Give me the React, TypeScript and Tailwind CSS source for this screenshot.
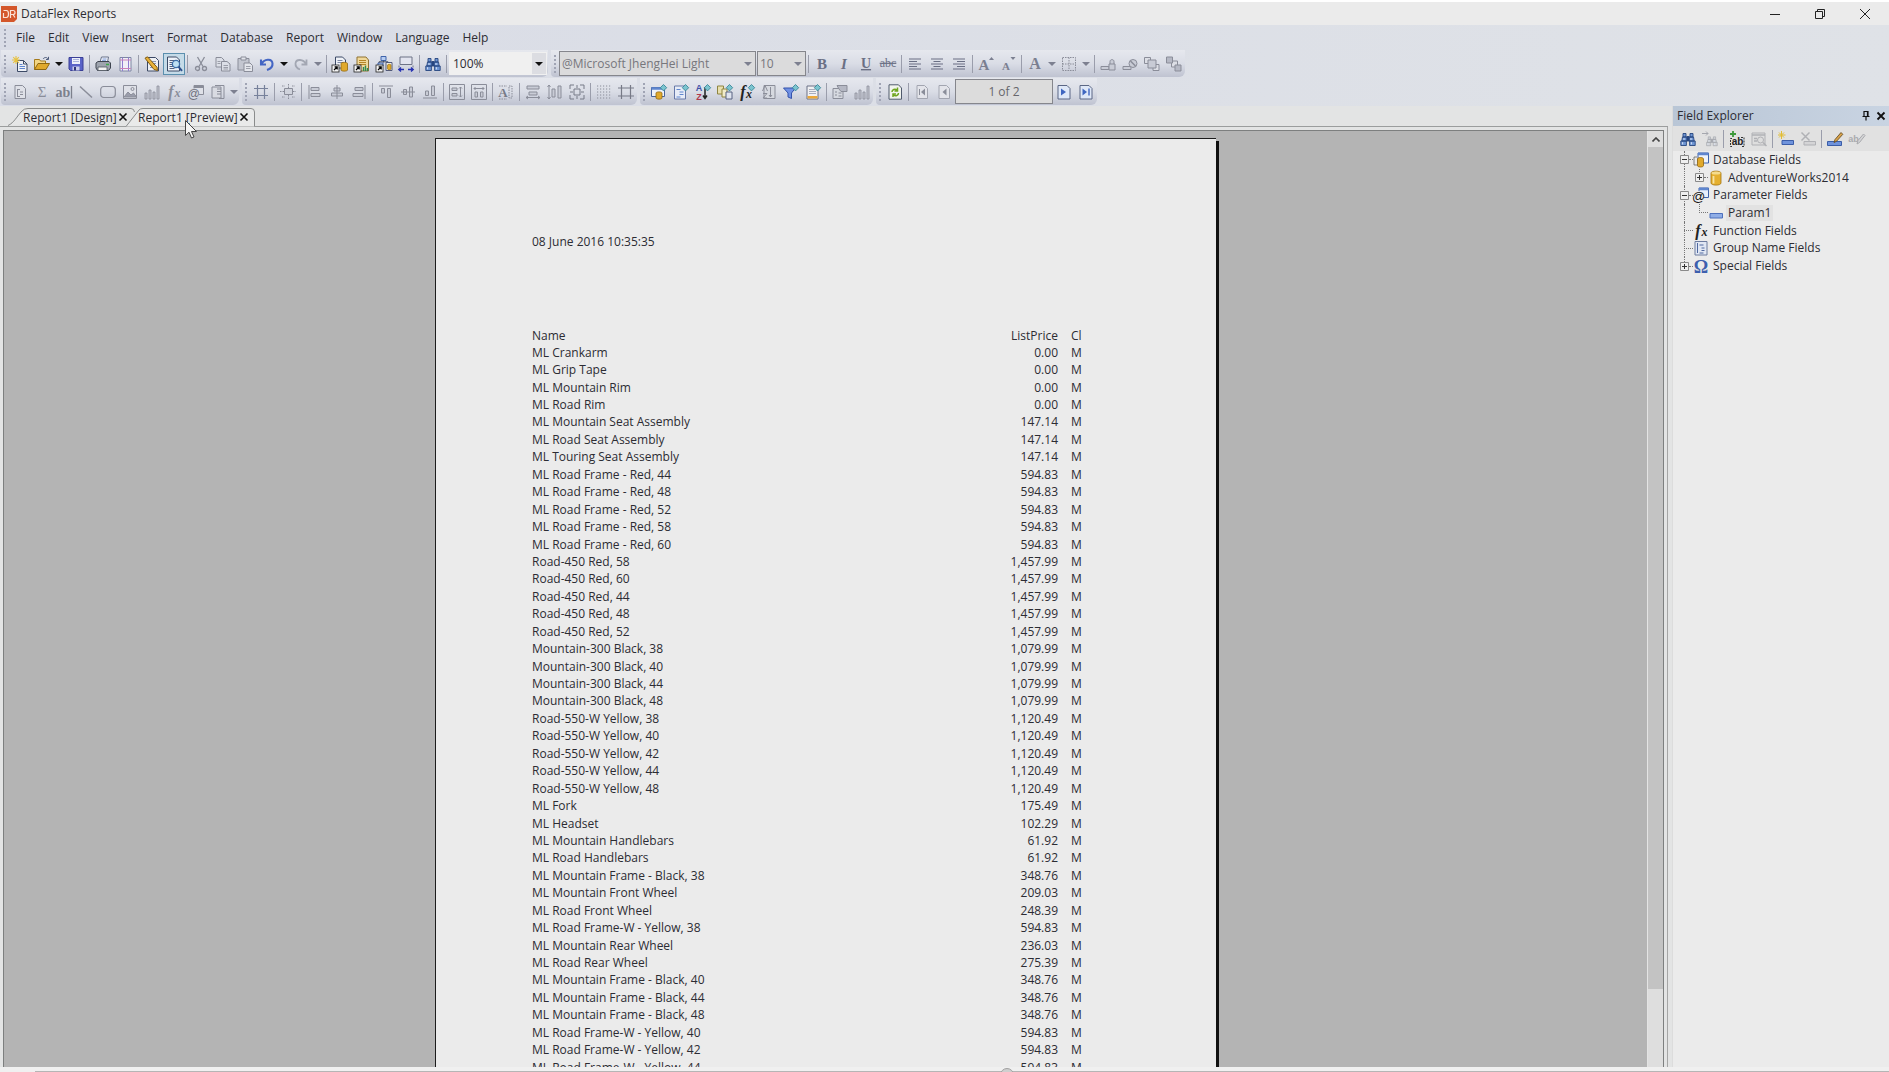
import type { ReactNode } from "react";

const G = "#8a8d99";
const GL = "#c9ccd6";
const N = "#3c4a66";
const B = "#5f86cf";
const Y = "#e0a92c";

const sheet = (stroke: string, fill: string) => (
  <path d="M3 1.5h7.5l3 3v10H3z" fill={fill} stroke={stroke} />
);
const diamond = <path d="M12.5 0.5l3.2 3.2-3.2 3.2-3.2-3.2z" fill="#7cc4cf" stroke="#2f7f92" strokeWidth=".8" />;
const shortcut = (
  <g>
    <rect x="0" y="9" width="7" height="7" fill="#f4f4f4" stroke="#222" strokeWidth=".8" />
    <path d="M2 14l3-3M2.6 10.8H5.2V13.4" stroke="#000" fill="none" strokeWidth="1.2" />
  </g>
);
const serif = (s: string, color: string, size = 13, extra: { italic?: boolean; underline?: boolean; strike?: boolean; y?: number; x?: number; bold?: boolean } = {}) => (
  <text
    x={extra.x ?? 8}
    y={extra.y ?? 13}
    textAnchor="middle"
    fontFamily="Liberation Serif, serif"
    fontWeight={extra.bold === false ? 400 : 700}
    fontSize={size}
    fontStyle={extra.italic ? "italic" : "normal"}
    textDecoration={extra.underline ? "underline" : extra.strike ? "line-through" : "none"}
    fill={color}
  >
    {s}
  </text>
);

const binoculars = (dark: string, mid: string) => (
  <g stroke={dark} fill={mid} strokeWidth=".9">
    <path d="M3 2.5h3V6H3zM10 2.5h3V6h-3zM2.5 6h4.5v4H1.8zM9 6h4.5l.7 4H9zM.8 10h5.6v4.5H.8zM9.6 10h5.6v4.5H9.6z" />
    <path d="M7 5.5h2V10H7z" fill={dark} />
    <path d="M2.6 11.2v2.2M11.4 11.2v2.2M4 7v2M11 7v2" stroke="#dfe8f8" />
  </g>
);

const icons: Record<string, ReactNode> = {
  new: (
    <g>
      <path d="M5.5 4.5h6l3.5 3.5v7.5H5.5z" fill="#eef1f6" stroke={N} />
      <path d="M11.5 4.5v3.5h3.5" fill="none" stroke={N} />
      <path d="M7.5 8.5h3M7.5 10.5h5.5M7.5 12.5h5.5" stroke={B} />
      <path d="M4 0v8M0 4h8M1.2 1.2l5.6 5.6M6.8 1.2L1.2 6.8" stroke="#e8c341" strokeWidth="1.1" />
    </g>
  ),
  open: (
    <g>
      <path d="M.5 13.5v-10h5l1 1.5h5v3" fill="#f3d685" stroke="#a57a1a" />
      <path d="M.5 13.5L4 7.5h11.5l-3.5 6z" fill={Y} stroke="#8d6612" />
      <path d="M9 3c1.5-2 4-2 5 0M14.5.8v2.7H12" fill="none" stroke="#4f5d7c" />
    </g>
  ),
  save: (
    <g>
      <path d="M1 1.5h14v13H2.5L1 13z" fill="#5a63c8" stroke="#3a3f96" />
      <path d="M4 2h8v6H4z" fill="#edf0fa" />
      <path d="M5 3.5h6M5 5.5h6" stroke="#a9b3dc" />
      <path d="M4.5 10.5h7v4h-7z" fill="#c9cee9" />
      <path d="M6 11h2v3.5H6z" fill="#2d3278" />
    </g>
  ),
  print: (
    <g>
      <path d="M5 6l1.5-5h7L12.5 6z" fill="#f5f6fa" stroke="#68738b" />
      <path d="M7.5 3h4M7 4.7h4" stroke={B} strokeWidth=".8" />
      <path d="M1 7l2-1.5h11L15.5 7v5l-2 2.5h-11L1 12z" fill="#9ea4ae" stroke="#3e444f" />
      <path d="M3 11h9v3.5H3z" fill="#f2f2f2" stroke="#4f5560" strokeWidth=".8" />
      <path d="M11 8.5h3" stroke="#3da84a" strokeWidth="1.5" />
    </g>
  ),
  margins: (
    <g>
      <path d="M3 1.5h11v13.5H3z" fill="#f0eff6" stroke="#7e86a3" />
      <path d="M5.5 1.5v13.5M11.5 1.5v13.5" stroke="#8d7bd0" />
      <path d="M3 4h11M3 12.5h11" stroke="#c882b8" />
    </g>
  ),
  edit: (
    <g>
      <path d="M3.5 1.5h8l3 3v10.5h-11z" fill="#eef0f4" stroke={N} />
      <path d="M6 5.5h6M6 7.5h6M6 9.5h6M6 11.5h6" stroke="#8d98b3" />
      <path d="M1 2.2L3.5.8l9.5 10.4.5 3.3-3.5-1z" fill="#e8b23a" stroke="#7f5a12" />
    </g>
  ),
  preview: (
    <g>
      <path d="M1.5 1h9l3 3v11h-12z" fill="#eef2f8" stroke={N} />
      <path d="M3.5 4.5h5M3.5 6.5h3.5M3.5 8.5h3M3.5 10.5h4M3.5 12.5h5" stroke="#55627f" />
      <circle cx="10" cy="8" r="3.6" fill="#bfe0f2" stroke="#3d6ea8" strokeWidth="1.3" />
      <path d="M12.6 10.8L16 14.8" stroke="#2d4f8c" strokeWidth="2" />
    </g>
  ),
  cut: (
    <g fill="none" stroke={G} strokeWidth="1.3">
      <path d="M4.5 1l5.5 9.5M11.5 1L6 10.5" />
      <circle cx="4.5" cy="12.5" r="2" />
      <circle cx="11.5" cy="12.5" r="2" />
    </g>
  ),
  copy: (
    <g stroke={G} fill="#dcdfe7">
      <path d="M1 1.5h5.5L9 4v7H1z" />
      <path d="M6.5 5.5H12l3 2.5v7H6.5z" />
      <path d="M8.5 9.5h4.5M8.5 11.5h4.5M8.5 13h4.5M2.5 5.5h3M2.5 7.5h3" strokeWidth=".8" />
    </g>
  ),
  paste: (
    <g stroke={G} fill="#c3c6d0">
      <path d="M1 2.5h11V14H1z" />
      <path d="M4 1h5v3H4z" fill="#e3e5eb" />
      <path d="M7 7h6l2.5 2.5v6H7z" fill="#e3e5eb" />
      <path d="M9 10.5h4.5M9 12.5h4.5" strokeWidth=".8" />
    </g>
  ),
  undo: <path d="M2 3.5v5h5M2.5 8C5 3 13 2 13.5 7.5c.3 3-2.5 5.5-5.5 6.5" fill="none" stroke="#4466c4" strokeWidth="2.1" />,
  redo: <path d="M13.5 3.5v5h-5M13 8C10.5 3 3 2.5 2.5 7.5 2.3 10.5 4.5 12.5 7 13.5" fill="none" stroke="#a3a7b3" strokeWidth="1.8" />,
  dbLink: (
    <g>
      <path d="M3.5 1h7l3 3v8h-10z" fill="#eef1f6" stroke={N} />
      <path d="M5.5 4.5h5M5.5 6.5h6" stroke="#7c88a5" />
      <path d="M9 7.5c0-1.5 6.5-1.5 6.5 0v6.5c0 1.5-6.5 1.5-6.5 0z" fill={Y} stroke="#92680f" strokeWidth=".8" />
      {shortcut}
    </g>
  ),
  groupLink: (
    <g>
      <path d="M3 1h9l2.5 3v11H3z" fill="#f0d89a" stroke="#8f7233" />
      <path d="M5 4.5h7M5 6.5h7M5 8.5h7" stroke="#b58628" />
      <path d="M9.5 15v-4M11.5 15V9.5M13.5 15v-3" stroke="#2e8b57" strokeWidth="1.4" />
      {shortcut}
    </g>
  ),
  tableLink: (
    <g>
      <path d="M5 .5h5v4H5z" fill="#b6cdf2" stroke="#3e63aa" />
      <path d="M2 7h5v3H2z" fill="#b6cdf2" stroke="#3e63aa" />
      <path d="M7.5 4.5v2M3 7V5.800h9V6" stroke="#444f68" fill="none" />
      <path d="M10 6.5h6v8h-6z" fill="#f3f1e5" stroke="#50597a" />
      <path d="M11.5 9c0-1 3.5-1 3.5 0v4c0 1-3.5 1-3.5 0z" fill={Y} stroke="#92680f" strokeWidth=".6" />
      {shortcut}
    </g>
  ),
  fitWidth: (
    <g>
      <path d="M2 1h12v7.5H2z" fill="#e2e4ef" stroke="#6d7386" />
      <path d="M1 9.5v2M15 9.5v2" stroke="#6d7386" />
      <path d="M1 13.5h5M3 11.5l-2.2 2L3 15.5M15 13.5h-5M13 11.5l2.2 2-2.2 2" stroke="#2530b0" strokeWidth="1.4" fill="none" />
    </g>
  ),
  find: binoculars("#27467f", "#6f96d4"),
  findGrey: (
    <g>
      <g transform="translate(4 4) scale(.74)">{binoculars("#a5a7ae", "#d0d2d6")}</g>
      <path d="M0 2.5h6M4 .5l2 2-2 2" stroke="#a5a7ae" fill="none" />
    </g>
  ),
  bold: serif("B", "#6a6f84", 15),
  italic: serif("I", "#6a6f84", 15, { italic: true }),
  underline: serif("U", "#6a6f84", 14, { underline: true, y: 12 }),
  strike: serif("abc", "#6a6f84", 12, { strike: true, y: 11, bold: false }),
  alignLeft: <path d="M2 3h12M2 5.5h8M2 8h12M2 10.5h8M2 13h12" stroke="#6a6f84" strokeWidth="1.2" />,
  alignCenter: <path d="M2 3h12M4.5 5.5h7M2 8h12M4.5 10.5h7M2 13h12" stroke="#6a6f84" strokeWidth="1.2" />,
  alignRight: <path d="M2 3h12M6 5.5h8M2 8h12M6 10.5h8M2 13h12" stroke="#6a6f84" strokeWidth="1.2" />,
  grow: (
    <g>
      {serif("A", "#7b7f90", 15, { x: 6, y: 14 })}
      <path d="M11 4l2.5-3L16 4z" fill="#7b7f90" />
    </g>
  ),
  shrink: (
    <g>
      {serif("A", "#7b7f90", 11, { x: 6, y: 14 })}
      <path d="M10.5 1h5L13 4z" fill="#7b7f90" />
    </g>
  ),
  color: serif("A", "#7b7f90", 16),
  borders: <path d="M1.5 1.5h13v13h-13zM8 1.5v13M1.5 8h13" fill="none" stroke={G} strokeDasharray="1.5 1" />,
  lock: (
    <g stroke={G} fill={GL}>
      <path d="M1 10.5h8v3H1z" />
      <path d="M9 8h6v6H9zM10 8V5.5c0-2.5 4-2.5 4 0V8" />
    </g>
  ),
  unlock: (
    <g stroke={G} fill={GL}>
      <path d="M1 10.5h8v3H1z" />
      <circle cx="11" cy="7.5" r="4" />
      <path d="M8.5 5l5 5" strokeWidth="1.5" />
    </g>
  ),
  front: (
    <g stroke={G} fill="#dcdee5">
      <path d="M9 8.5h6v6H9zM.5 1.5h6v6h-6z" />
      <path d="M4 4h8v8H4z" fill="#c8cbd5" />
    </g>
  ),
  back: (
    <g stroke={G} fill="#dcdee5">
      <path d="M5.5 5h6v6h-6z" />
      <path d="M.5 1h6v6h-6zM9 9h6v6H9z" fill="#b5b8c4" />
    </g>
  ),
  report: (
    <g>
      {sheet(G, "#dfe1e8")}
      <path d="M5 5.5h3M8 8h3M8 10.5h3M5 12.5h3M5.5 6v6" stroke={G} fill="none" />
    </g>
  ),
  sum: serif("Σ", G, 15, { bold: false }),
  label: (
    <g>
      <text x="7" y="12.5" textAnchor="middle" fontFamily="Liberation Serif, serif" fontSize="14" fontWeight="700" fill="#7d808c">ab</text>
      <path d="M15.5 2v12.5" stroke="#7d808c" strokeWidth="1.3" />
    </g>
  ),
  line: <path d="M2 2.5l12 11" stroke={G} strokeWidth="1.5" />,
  box: <rect x=".7" y="2.5" width="14.6" height="11" rx="3" fill="none" stroke={G} strokeWidth="1.2" />,
  image: (
    <g stroke={G} fill="#dfe1e8">
      <path d="M1.5 1.5h13v13h-13z" />
      <path d="M2 13l4-5 3 3 2.5-2 3 4z" fill="#9a9dab" />
      <circle cx="10.5" cy="5" r="1.5" />
    </g>
  ),
  bars: (
    <g fill="#c3c6d0" stroke={G} strokeWidth=".8">
      <path d="M1 9h2v6H1zM5 6h2v9H5zM9 8h2v7H9zM13 2h2v13h-2z" />
    </g>
  ),
  fx: (
    <g>
      {serif("f", G, 16, { italic: true, x: 5 })}
      {serif("x", G, 12, { italic: true, x: 11.5 })}
    </g>
  ),
  param: (
    <g>
      <path d="M6 1.5h9.5v9H6z" fill="#dfe1e8" stroke={G} />
      <path d="M6 3h9.5" stroke={G} strokeWidth="2" />
      <circle cx="5.8" cy="9.5" r="5.3" fill="#d6d9e2" />
      <text x="5.8" y="13.5" textAnchor="middle" fontFamily="Liberation Sans, sans-serif" fontSize="12" fill="#6f727e">@</text>
    </g>
  ),
  subreport: (
    <g stroke={G} fill="#d9dbe2">
      <path d="M2 3h9v11H2z" />
      <path d="M5 1.5h9v13H9M7 5h4M7 7.5h4M7 10h4" fill="none" />
    </g>
  ),
  grid1: <path d="M4.5 1v14M11.5 1v14M1 4.5h14M1 11.5h14" stroke="#77819b" strokeWidth="1.2" />,
  grid2: (
    <g stroke={G} fill="#d0d3dc">
      <path d="M4.5 4.5h8v6h-8z" />
      <path d="M8.5 0v4M8.5 11v4M0 7.5h4M13 7.5h3M2 2h3M12 2h3M2 13h3M12 13h3" strokeDasharray="1.5 1" />
    </g>
  ),
  aL: <path d="M2 1v14M4 3.5h8v3H4zM4 9.5h9v3H4z" stroke={G} fill={GL} />,
  aC: <path d="M8 1v14M2.5 9h11v3h-11zM5 4h6v3H5z" stroke={G} fill={GL} />,
  aR: <path d="M14 1v14M4 3.5h8v3H4zM2 9.5h10v3H2z" stroke={G} fill={GL} />,
  aT: <path d="M1 2h14M3.5 4.5h3V9h-3zM9.5 4.5h3v9h-3z" stroke={G} fill={GL} />,
  aM: <path d="M1 8h14M3.5 5.5h3v5h-3zM9.5 3h3v10h-3z" stroke={G} fill={GL} />,
  aB: <path d="M1 14h14M3.5 7h3v4.5h-3zM9.5 2h3v9.5h-3z" stroke={G} fill={GL} />,
  sH: (
    <g stroke={G} fill={GL}>
      <path d="M.5 .5h15v15H.5z" fill="none" />
      <path d="M3 4h5v2.500H3zM3 9.5h5V12H3z" />
      <path d="M11.5 3v10M10 4.5l1.5-1.5L13 4.5M10 11.5l1.5 1.5 1.5-1.5" fill="none" />
    </g>
  ),
  sW: (
    <g stroke={G} fill={GL}>
      <path d="M.5 .5h15v15H.5z" fill="none" />
      <path d="M4 8h2.5v5H4zM9.5 8H12v5H9.5z" />
      <path d="M3 4.5h10M4.5 3L3 4.5 4.5 6M11.5 3L13 4.5 11.5 6" fill="none" />
    </g>
  ),
  sA: (
    <g>
      {serif("A", "#777a87", 13, { x: 5, y: 13 })}
      <path d="M1 2h8M1 15h8M11 2h3v12h-3z" stroke={G} fill="none" strokeDasharray="1.5 1" />
    </g>
  ),
  eW: (
    <g stroke={G} fill={GL}>
      <path d="M2 2h12v3H2zM4 8h8v3H4z" />
      <path d="M1 13.5h14M3 12l-2 1.5L3 15M13 12l2 1.5-2 1.5" fill="none" />
    </g>
  ),
  eH: (
    <g stroke={G} fill={GL}>
      <path d="M5 5h3v8H5zM11 2h3v12h-3z" />
      <path d="M2 1v14M.5 3L2 1l1.5 2M.5 13L2 15l1.5-2" fill="none" />
    </g>
  ),
  eB: (
    <g stroke="#777a87" fill="none">
      <path d="M1 5V1h4M11 1h4v4M15 11v4h-4M5 15H1v-4" />
      <path d="M5 5h6v6H5zM8 1v3M8 12v3M1 8h3M12 8h3" />
    </g>
  ),
  dots: <path d="M1 2h14M1 5h14M1 8h14M1 11h14M1 14h14" stroke={G} strokeWidth="1.2" strokeDasharray="1.2 1.8" />,
  frame: <path d="M3.5 1v14M12.5 1v14M0 4h16M0 12h16" stroke="#777a87" strokeWidth="1.2" />,
  dbField: (
    <g>
      <path d="M.5 3.5h13v9H.5z" fill="#eff3fa" stroke="#46639d" />
      <path d="M.5 4.5h13" stroke={B} strokeWidth="2.5" />
      <path d="M5 9c0-1.5 6-1.5 6 0v5c0 1.5-6 1.5-6 0z" fill={Y} stroke="#92680f" strokeWidth=".8" />
      {diamond}
    </g>
  ),
  reportD: (
    <g>
      <path d="M1.5 2h10l1 1v12h-11z" fill="#e7ecf7" stroke="#6678a8" />
      <path d="M3.5 5.5h4M6.5 8h4M6.5 10.5h4M3.5 13h4" stroke={B} />
      {diamond}
    </g>
  ),
  sort: (
    <g>
      <text x="4" y="7" textAnchor="middle" fontFamily="Liberation Sans, sans-serif" fontSize="9" fontWeight="700" fill="#3c50a8">A</text>
      <text x="4" y="15.5" textAnchor="middle" fontFamily="Liberation Sans, sans-serif" fontSize="9" fontWeight="700" fill="#b0394c">Z</text>
      <path d="M10 3v11M8 11.5l2 3 2-3" stroke="#222" strokeWidth="1.5" fill="none" />
      {diamond}
    </g>
  ),
  group: (
    <g>
      <path d="M.5 2h6v8h-6z" fill="#e8dfae" stroke="#8e8440" />
      <path d="M5 5h5v8H5z" fill="#f2ecca" stroke="#8e8440" />
      <path d="M9 8h6v7H9z" fill="#dfe4ef" stroke="#596381" />
      {diamond}
    </g>
  ),
  fxD: (
    <g>
      {serif("f", "#222", 16, { italic: true, x: 4 })}
      {serif("x", "#222", 12, { italic: true, x: 10, y: 14 })}
      {diamond}
    </g>
  ),
  sortGrey: (
    <g>
      <path d="M3 1.5h11v13H3z" fill="#d6d9e0" stroke={G} />
      <path d="M1.5 7L4 1.5 6.5 7M2 9.5h4l-4 4.5h4M9.5 3v10M8 11l1.5 2 1.5-2" stroke={G} fill="none" />
    </g>
  ),
  filter: (
    <g>
      <path d="M.5 4h12L8.5 9v5.500L5 13V9z" fill="#6f90e4" stroke="#3553ab" />
      {diamond}
    </g>
  ),
  section: (
    <g>
      <path d="M2 2h11v13H2z" fill="#f1f1f3" stroke="#6a7186" />
      <path d="M2.5 12h10v2.5h-10z" fill="#eba83a" />
      <path d="M4 5.5h6M4 7.5h7M4 9.5h7" stroke="#a7adbd" />
      {diamond}
    </g>
  ),
  props: (
    <g stroke={G} fill="#d6d9e0">
      <path d="M1 4.5h10v10H1z" />
      <path d="M5 1.5h10v6H9L7 5z" fill="#b5b8c4" />
      <path d="M3 8h2M3 11h2M6.5 9h3M6.5 12h3" />
    </g>
  ),
  refresh: (
    <g>
      <path d="M2 .8h9.5L14.5 4v11.2H2z" fill="#f1f4ee" stroke="#505a6d" />
      <path d="M5 8c0-2.5 3-3.5 5-2M10.5 3.5V7H7.5M11.5 9c0 2.5-3 3.5-5 2M6 13V10h3" fill="none" stroke="#6fa51f" strokeWidth="1.5" />
    </g>
  ),
  first: (
    <g>
      {sheet("#a2a5b0", "#e3e4ea")}
      <path d="M5.5 5v6" stroke={G} />
      <path d="M11 4.5v7L7 8z" fill={G} />
    </g>
  ),
  prev: (
    <g>
      {sheet("#a2a5b0", "#e3e4ea")}
      <path d="M10.5 4.5v7L6.5 8z" fill={G} />
    </g>
  ),
  next: (
    <g>
      <path d="M2 1.5h9l3 3v10.5H2z" fill="#dfe8f8" stroke="#5b6785" />
      <path d="M5 4.500v7L10 8z" fill="#3f66c0" />
    </g>
  ),
  last: (
    <g>
      <path d="M2 1.5h9l3 3v10.5H2z" fill="#dfe8f8" stroke="#5b6785" />
      <path d="M4.5 4.5v7L9 8z" fill="#3f66c0" />
      <path d="M11 4.5v7" stroke="#3f66c0" strokeWidth="1.4" />
    </g>
  ),
  addLabel: (
    <g>
      <path d="M4 0v6M1 3h6" stroke="#3d9a3b" strokeWidth="1.8" />
      <text x="8.5" y="14" textAnchor="middle" fontFamily="Liberation Sans, sans-serif" fontSize="10" fontWeight="700" fill="#222">ab</text>
      <path d="M3 7.5H1.5v8H4M12 6.500h3v9h-2" stroke="#333" fill="none" strokeDasharray="2 1" />
    </g>
  ),
  browse: (
    <g stroke="#b0b1b5" fill="#dedede">
      <path d="M1 2h13v12H1z" />
      <path d="M1 4h13M3 7.5h3M3 10h3" strokeWidth="1.3" />
      <circle cx="9.5" cy="9" r="3" />
      <path d="M12 11.5l3.5 3.5" strokeWidth="1.5" />
    </g>
  ),
  addField: (
    <g>
      <path d="M3.5 0v8M0 4h7.5M1 1.5l5 5M6 1.5l-5 5" stroke="#e2bd35" />
      <path d="M4 9.5h11.5v4H4z" fill="#6f93dc" stroke="#3b5da8" />
    </g>
  ),
  delField: (
    <g stroke="#b0b1b5" fill="#d4d4d6">
      <path d="M4 10.5h11.5v3.5H4z" />
      <path d="M1.5 1.5l8 8M9.5 1.5l-8 8" strokeWidth="1.5" />
    </g>
  ),
  rename: (
    <g>
      <path d="M.5 10.5h14v4H.5z" fill="#6f93dc" stroke="#3b5da8" />
      <path d="M7 11.5l1-3L14 1.5l1.8 1.8-6.3 7z" fill="#d9a24a" stroke="#5d4417" strokeWidth=".8" />
    </g>
  ),
  editLabel: (
    <g>
      <text x="4.500" y="11" textAnchor="middle" fontFamily="Liberation Sans, sans-serif" fontSize="9" fontWeight="700" fill="#a9aaae">ab</text>
      <path d="M8 13l1-3.5L14.5 3l1.5 1.5-5.5 7z" fill="#d4d4d6" stroke="#a9aaae" />
    </g>
  ),
  treeDb: (
    <g>
      <path d="M5 1h10.500v10H5z" fill="#eef3fb" stroke="#3e63aa" />
      <path d="M5 2h10.500" stroke={B} strokeWidth="2.500" />
      <path d="M1 5h3M1 5v8h4" stroke="#555" fill="none" strokeWidth=".7" />
      <path d="M4.500 7c0-2 6-2 6 0v6.500c0 2-6 2-6 0z" fill={Y} stroke="#8f6410" strokeWidth=".8" />
    </g>
  ),
  cylinder: (
    <g>
      <path d="M3 3c0-2.500 10-2.500 10 0v10c0 2.800-10 2.800-10 0z" fill="#e5b030" stroke="#a3740f" strokeWidth=".8" />
      <ellipse cx="8" cy="3" rx="4.500" ry="1.500" fill="#f5dc8d" />
      <path d="M5.500 6v7.500" stroke="#f7e3a3" strokeWidth="1.800" />
    </g>
  ),
  treeParam: (
    <g>
      <path d="M6 1h9.500v9.500H6z" fill="#e9effb" stroke="#3e63aa" />
      <path d="M6 2h9.500" stroke={B} strokeWidth="2.500" />
      <circle cx="5.500" cy="9.500" r="5.500" fill="#ebebeb" />
      <text x="5.500" y="13.500" textAnchor="middle" fontFamily="Liberation Sans, sans-serif" fontSize="13" fill="#111">@</text>
    </g>
  ),
  field: <path d="M2 8.500h12.500v4.500H2z" fill="#8fade6" stroke="#4d70bd" />,
  treeFx: (
    <g>
      {serif("f", "#222", 16, { italic: true, x: 5 })}
      {serif("x", "#222", 12, { italic: true, x: 11.500 })}
    </g>
  ),
  treeGroup: (
    <g>
      <path d="M2 1.500h12v13.500H2z" fill="#e1e7f3" stroke="#6d7c9f" />
      <path d="M4.500 3v10M6.500 5h4M8.500 8h3M8.500 10.500h3M6.500 13h4" stroke="#4f689f" fill="none" />
    </g>
  ),
  omega: <text x="8" y="14.500" textAnchor="middle" fontFamily="Liberation Serif, serif" fontSize="18" fontWeight="700" fill="#3d5fae">Ω</text>,
};

function Icon({ name }: { name: string }) {
  return (
    <svg viewBox="0 0 16 16" className="size-4 shrink-0 overflow-visible" aria-hidden="true">
      {icons[name]}
    </svg>
  );
}

function Caret({ dark = false }: { dark?: boolean }) {
  return (
    <svg viewBox="0 0 8 4" className="h-1 w-2 shrink-0" aria-hidden="true">
      <path d="M0 0h8L4 4z" fill={dark ? "#111" : "#7d8090"} />
    </svg>
  );
}

function Tool({ name, active = false }: { name: string; active?: boolean }) {
  return (
    <button
      type="button"
      aria-label={name}
      className={
        active
          ? "flex h-[22px] w-[22px] shrink-0 items-center justify-center border border-[#5b8fae] bg-[#c5dbe8]"
          : "flex h-[22px] w-[22px] shrink-0 items-center justify-center"
      }
    >
      <Icon name={name} />
    </button>
  );
}

function Drop({ dark = false, narrow = false }: { dark?: boolean; narrow?: boolean }) {
  return (
    <button
      type="button"
      aria-label="More options"
      className={narrow ? "flex h-[22px] w-2.5 shrink-0 items-center justify-center" : "flex h-[22px] w-3 shrink-0 items-center justify-center"}
    >
      <Caret dark={dark} />
    </button>
  );
}

function Sep() {
  return <div className="mx-0.5 h-[18px] w-px shrink-0 bg-[#9a9dab]" />;
}

function Grip() {
  return (
    <div className="flex w-2 shrink-0 justify-center">
      <div className="h-[18px] border-l-2 border-dotted border-[#a0a4b4]" />
    </div>
  );
}

/* "|" separates groups, "v" and "V" are grey and black drop arrows. */
function Tools({ list }: { list: string }) {
  return (
    <>
      {list.split(" ").map((t, i) =>
        t === "|" ? (
          <Sep key={i} />
        ) : t === "v" || t === "V" ? (
          <Drop key={i} dark={t === "V"} />
        ) : (
          <Tool key={i} name={t} active={t === "preview"} />
        ),
      )}
    </>
  );
}

function Bar({ children }: { children: ReactNode }) {
  return (
    <div className="flex h-[27px] items-center rounded-br-md rounded-bl-sm bg-linear-to-b from-[#e6e8ee] via-[#dadde6] to-[#bfc3d1]">
      <Grip />
      {children}
    </div>
  );
}

const menus = ["File", "Edit", "View", "Insert", "Format", "Database", "Report", "Window", "Language", "Help"];

function Tab({ label, active = false }: { label: string; active?: boolean }) {
  return (
    <div className={active ? "relative -ml-2 flex h-[18px] w-[129px] items-center justify-between pr-1.5 pl-3" : "relative flex h-[18px] w-[126px] items-center justify-between pr-1.5 pl-[15px]"}>
      <svg viewBox={active ? "0 0 129 18" : "0 0 126 18"} className="absolute inset-0 size-full overflow-visible" aria-hidden="true">
        {active ? (
          <path d="M0 18.5L13 2Q14 .5 17 .5H125Q128.5 .5 128.5 4V18.5" fill="#e9eaea" stroke="#8a8c8c" />
        ) : (
          <path d="M0 17.5C6 15 9 8 14 3Q16 .5 20 .5H123Q126 .5 126.5 4" fill="#e6e7e7" stroke="#8a8c8c" />
        )}
      </svg>
      <button type="button" className="relative pt-0.5 whitespace-nowrap">{label}</button>
      <button type="button" aria-label={`Close ${label}`} className="relative">
        <svg viewBox="0 0 10 10" className="size-2.5" aria-hidden="true">
          <path d="M1.5 1.5l7 7M8.5 1.5l-7 7" stroke="#111" strokeWidth="1.6" />
        </svg>
      </button>
    </div>
  );
}

const rows: [string, string][] = [
  ["ML Crankarm", "0.00"],
  ["ML Grip Tape", "0.00"],
  ["ML Mountain Rim", "0.00"],
  ["ML Road Rim", "0.00"],
  ["ML Mountain Seat Assembly", "147.14"],
  ["ML Road Seat Assembly", "147.14"],
  ["ML Touring Seat Assembly", "147.14"],
  ["ML Road Frame - Red, 44", "594.83"],
  ["ML Road Frame - Red, 48", "594.83"],
  ["ML Road Frame - Red, 52", "594.83"],
  ["ML Road Frame - Red, 58", "594.83"],
  ["ML Road Frame - Red, 60", "594.83"],
  ["Road-450 Red, 58", "1,457.99"],
  ["Road-450 Red, 60", "1,457.99"],
  ["Road-450 Red, 44", "1,457.99"],
  ["Road-450 Red, 48", "1,457.99"],
  ["Road-450 Red, 52", "1,457.99"],
  ["Mountain-300 Black, 38", "1,079.99"],
  ["Mountain-300 Black, 40", "1,079.99"],
  ["Mountain-300 Black, 44", "1,079.99"],
  ["Mountain-300 Black, 48", "1,079.99"],
  ["Road-550-W Yellow, 38", "1,120.49"],
  ["Road-550-W Yellow, 40", "1,120.49"],
  ["Road-550-W Yellow, 42", "1,120.49"],
  ["Road-550-W Yellow, 44", "1,120.49"],
  ["Road-550-W Yellow, 48", "1,120.49"],
  ["ML Fork", "175.49"],
  ["ML Headset", "102.29"],
  ["ML Mountain Handlebars", "61.92"],
  ["ML Road Handlebars", "61.92"],
  ["ML Mountain Frame - Black, 38", "348.76"],
  ["ML Mountain Front Wheel", "209.03"],
  ["ML Road Front Wheel", "248.39"],
  ["ML Road Frame-W - Yellow, 38", "594.83"],
  ["ML Mountain Rear Wheel", "236.03"],
  ["ML Road Rear Wheel", "275.39"],
  ["ML Mountain Frame - Black, 40", "348.76"],
  ["ML Mountain Frame - Black, 44", "348.76"],
  ["ML Mountain Frame - Black, 48", "348.76"],
  ["ML Road Frame-W - Yellow, 40", "594.83"],
  ["ML Road Frame-W - Yellow, 42", "594.83"],
  ["ML Road Frame-W - Yellow, 44", "594.83"],
];

function Toggle({ open }: { open: boolean }) {
  return (
    <svg viewBox="0 0 9 9" className="size-[9px] shrink-0" aria-hidden="true">
      <path d="M.5 .5h8v8h-8z" fill="#efefef" stroke="#8a8a8a" />
      <path d={open ? "M2 4.5h5" : "M2 4.5h5M4.5 2v5"} stroke="#333" />
    </svg>
  );
}

const tree: { label: string; icon: string; child?: boolean; toggle?: "open" | "closed"; selected?: boolean }[] = [
  { label: "Database Fields", icon: "treeDb", toggle: "open" },
  { label: "AdventureWorks2014", icon: "cylinder", child: true, toggle: "closed" },
  { label: "Parameter Fields", icon: "treeParam", toggle: "open" },
  { label: "Param1", icon: "field", child: true, selected: true },
  { label: "Function Fields", icon: "treeFx" },
  { label: "Group Name Fields", icon: "treeGroup" },
  { label: "Special Fields", icon: "omega", toggle: "closed" },
];

function TreeRow({ item, last }: { item: (typeof tree)[number]; last: boolean }) {
  return (
    <li className={item.child ? "relative flex items-center pl-[22px]" : "relative flex items-center pl-[7px]"}>
      <span className={last ? "absolute top-0 left-[11px] h-1/2 border-l border-dotted border-[#777]" : "absolute top-0 left-[11px] h-full border-l border-dotted border-[#777]"} />
      {item.child && <span className="absolute top-0 left-[26px] h-1/2 border-l border-dotted border-[#777]" />}
      <span className="relative flex w-[13px] items-center">
        {item.toggle ? <Toggle open={item.toggle === "open"} /> : <span className="w-1" />}
        <span className="flex-1 border-t border-dotted border-[#777]" />
      </span>
      <span className="relative flex"><Icon name={item.icon} /></span>
      <button type="button" className={item.selected ? "ml-0.5 bg-[#e2e2e2] px-0.5 leading-4" : "ml-0.5 px-0.5 leading-4"}>{item.label}</button>
    </li>
  );
}

export default function App() {
  return (
    <div className="flex h-screen flex-col overflow-hidden border-t-2 border-white bg-[#e3e4e4] font-['Open_Sans','Noto_Sans',sans-serif] text-xs text-[#2c2c33]">
      <header className="flex h-[23px] shrink-0 items-center bg-[#ebebeb] pl-px">
        <svg viewBox="0 0 16 16" className="mr-1 size-4" aria-hidden="true">
          <path d="M0 0h16v13l-3 3H0z" fill="#d4572b" />
          <path d="M2.5 4.5h3Q7.5 4.5 7.5 8t-2 3.5h-3V7M9.5 12V4.5h2.5q2 0 2 2t-2 2H9.5M12 8.5l2 3" fill="none" stroke="#fbe3d6" strokeWidth="1.2" />
        </svg>
        <h1 className="flex-1">DataFlex Reports</h1>
        <div className="flex gap-[29px] pr-4 text-[#222]">
          <button type="button" aria-label="Minimize" className="flex w-4 justify-center">
            <svg viewBox="0 0 12 12" className="size-3"><path d="M1 6.5h10" stroke="currentColor" /></svg>
          </button>
          <button type="button" aria-label="Restore" className="flex w-4 justify-center">
            <svg viewBox="0 0 12 12" className="size-3"><path d="M1.5 3.5h7v7h-7zM3.5 3.5v-2h7v7h-2" fill="none" stroke="currentColor" /></svg>
          </button>
          <button type="button" aria-label="Close" className="flex w-4 justify-center">
            <svg viewBox="0 0 12 12" className="size-3"><path d="M1 1l10 10M11 1L1 11" stroke="currentColor" /></svg>
          </button>
        </div>
      </header>

      <div className="shrink-0 bg-linear-to-r from-[#d9dce6] to-[#dfe2e7] pb-px pl-px">
        <nav className="flex h-[25px] items-center">
          <Grip />
          {menus.map((m) => (
            <button key={m} type="button" className="pr-1.5 pl-[7px] text-left whitespace-nowrap">{m}</button>
          ))}
        </nav>
        <div className="flex gap-[3px]">
          <Bar>
            <Tools list="new open V save | print margins | edit preview | cut copy paste undo V redo v | dbLink groupLink tableLink fitWidth | find |" />
            <div className="relative mr-px h-[23px] w-[98px]">
              <select aria-label="Zoom" className="size-full appearance-none bg-[#f0f0f0] pl-1 leading-5">
                <option>100%</option>
              </select>
              <span className="pointer-events-none absolute top-px right-px flex h-[21px] w-3.5 items-center justify-center bg-[#dcdde2]"><Caret dark /></span>
            </div>
          </Bar>
          <Bar>
            <div className="relative h-[25px] w-[197px]">
              <select aria-label="Font" className="size-full appearance-none border border-[#85868c] bg-[#dbdbdc] pl-0.5 text-[#77777c]">
                <option>@Microsoft JhengHei Light</option>
              </select>
              <span className="pointer-events-none absolute top-0 right-1 flex h-full items-center"><Caret /></span>
            </div>
            <div className="relative ml-px h-[25px] w-[49px]">
              <select aria-label="Font size" className="size-full appearance-none border border-[#85868c] bg-[#dbdbdc] pl-0.5 text-[#77777c]">
                <option>10</option>
              </select>
              <span className="pointer-events-none absolute top-0 right-1 flex h-full items-center"><Caret /></span>
            </div>
            <Tools list="| bold italic underline strike | alignLeft alignCenter alignRight | grow shrink | color v borders v | lock unlock front back" />
          </Bar>
        </div>
        <div className="mt-px flex gap-[3px]">
          <Bar>
            <Tools list="report sum label line box image bars fx param subreport" />
            <Drop narrow />
          </Bar>
          <Bar>
            <Tools list="grid1 | grid2 | aL aC aR | aT aM aB | sH sW | sA | eW eH eB | dots frame" />
          </Bar>
          <Bar>
            <Tools list="dbField reportD sort group fxD sortGrey filter section | props bars" />
          </Bar>
          <Bar>
            <Tools list="refresh | first prev" />
            <input aria-label="Page" readOnly value="1 of 2" className="h-[25px] w-[98px] border border-[#85868c] bg-[#dcdcdc] text-center text-[#66666b]" />
            <Tools list="next last" />
          </Bar>
        </div>
      </div>

      <div className="flex min-h-0 flex-1">
        <main className="flex min-w-0 flex-1 flex-col">
          <div className="relative flex h-[21px] shrink-0 items-end border-b border-[#9b9d9d] pl-2">
            <Tab label="Report1 [Design]" />
            <Tab label="Report1 [Preview]" active />
            <svg viewBox="0 0 12 19" className="absolute top-3.5 left-[185px] z-10 h-[19px] w-3" aria-hidden="true">
              <path d="M.5 .5v15l3.5-3.3L6.5 18l2.5-1-2.5-5.5h5z" fill="#f4f4f4" stroke="#444" />
            </svg>
          </div>
          <div className="flex min-h-0 flex-1 border-r border-[#a5a5a5] pt-[3px] pr-[3px] pl-[3px]">
            <div className="flex min-h-0 min-w-0 flex-1 border-t border-r border-l border-[#7d7f7f] bg-[#b4b4b4]">
              <div className="flex min-w-0 flex-1 items-start justify-center self-stretch overflow-hidden pt-[7px]">
                <article className="min-h-full w-[781px] shrink-0 border-t border-l border-[#1c1c1c] bg-[#ebebeb] px-24 pt-[95px] shadow-[3px_3px_0_0_#111]">
                  <p className="leading-4">08 June 2016 10:35:35</p>
                  <table className="mt-[78px] h-[749px] w-full table-fixed leading-4">
                    <thead>
                      <tr>
                        <th scope="col" className="w-[426px] p-0 text-left font-normal">Name</th>
                        <th scope="col" className="w-[100px] p-0 text-right font-normal">ListPrice</th>
                        <th scope="col" className="py-0 pr-0 pl-[13px] text-left font-normal">Cl</th>
                      </tr>
                    </thead>
                    <tbody>
                      {rows.map(([name, price]) => (
                        <tr key={name}>
                          <td className="p-0">{name}</td>
                          <td className="p-0 text-right">{price}</td>
                          <td className="py-0 pr-0 pl-[13px]">M</td>
                        </tr>
                      ))}
                    </tbody>
                  </table>
                </article>
              </div>
              <div className="flex w-4 shrink-0 flex-col border-l border-[#e4e4e4] bg-[#dedede]">
                <button type="button" aria-label="Scroll up" className="flex h-4 shrink-0 items-center justify-center">
                  <svg viewBox="0 0 8 5" className="h-[5px] w-2"><path d="M.5 4.5L4 1l3.5 3.5" fill="none" stroke="#444" strokeWidth="1.6" /></svg>
                </button>
                <div className="h-[90%] bg-[#c3c3c3]" />
              </div>
            </div>
          </div>
        </main>

        <aside className="ml-1 flex w-[217px] shrink-0 flex-col border-l border-[#dcdcdc] bg-[#ebebeb]">
          <div className="flex h-5 shrink-0 items-center bg-linear-to-r from-[#b9c6d6] to-[#c9d4e2] pr-[3px] pl-1">
            <h2 className="flex-1">Field Explorer</h2>
            <button type="button" aria-label="Pin" className="mr-1.5">
              <svg viewBox="0 0 8 10" className="h-2.5 w-2"><path d="M2 .5h4v5H2zM.5 5.5h7M4 5.5v4M5.5 .5v5" fill="none" stroke="#111" strokeWidth="1.2" /></svg>
            </button>
            <button type="button" aria-label="Close panel">
              <svg viewBox="0 0 10 10" className="size-2.5"><path d="M1.5 1.5l7 7M8.5 1.5l-7 7" stroke="#111" strokeWidth="1.8" /></svg>
            </button>
          </div>
          <div className="flex h-[25px] shrink-0 items-center bg-[#e1e1e1] pl-1">
            <Tools list="find findGrey | addLabel browse | addField delField | rename editLabel" />
          </div>
          <ul className="grid h-[124px] shrink-0 auto-rows-fr">
            {tree.map((item, i) => (
              <TreeRow key={item.label} item={item} last={i === tree.length - 1} />
            ))}
          </ul>
        </aside>
      </div>

      <footer className="relative flex h-[5px] shrink-0 items-end bg-[#f0f0f0]">
        <div className="ml-[35px] h-px flex-1 bg-[#b5b5b5]" />
        <span className="absolute top-px left-[1000px] size-3.5 rounded-full border border-[#a0a0a0] bg-[#cfcfcf]" />
      </footer>
    </div>
  );
}
